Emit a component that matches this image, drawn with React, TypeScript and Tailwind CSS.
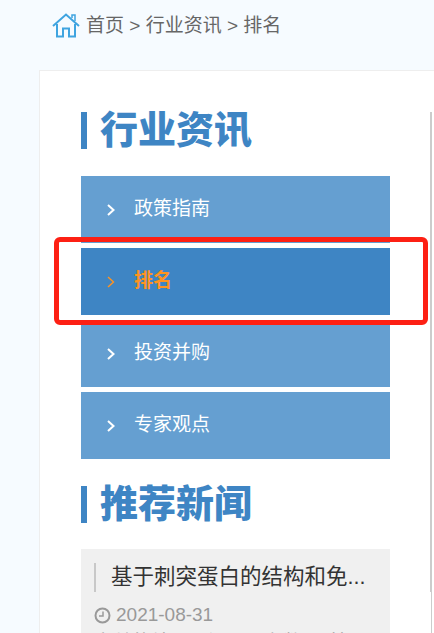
import React from "react";

const sansStack = "font-['Liberation_Sans','Noto_Sans_CJK_SC',sans-serif]";

const menu = [
  { label: "政策指南" },
  { label: "排名", active: true },
  { label: "投资并购" },
  { label: "专家观点" },
];

const HomeIcon = () => (
  <svg width="28" height="25" viewBox="0 0 28 25" fill="none" stroke="#3fa4e0" strokeWidth="2">
    <path d="M1 13 L14 1.5 L27 13" />
    <path d="M20 5 V2 H23 V8" strokeWidth="1.5" />
    <path d="M5 11 V23.5 H11 V15.5 H17 V23.5 H23 V11" />
  </svg>
);

const Chevron = ({ color, thin }: { color: string; thin?: boolean }) => (
  <svg width="8" height="12" viewBox="0 0 8 12" fill="none" stroke={color} strokeWidth={thin ? 1.4 : 2}>
    <path d="M1 1 L6.5 6 L1 11" />
  </svg>
);

const SectionTitle = ({ text }: { text: string }) => (
  <div className="flex items-center h-[37px] border-l-[6px] border-[#3e85c4] pl-[13px]">
    <h2 className="text-[38px] leading-[37px] font-black text-[#3e85c4]">{text}</h2>
  </div>
);

export default function App() {
  return (
    <div className={`relative h-[633px] w-[434px] overflow-hidden bg-[#f6fbff] ${sansStack}`}>
      <div className="flex items-center h-[70px] pl-[52px] pb-[19px]">
        <HomeIcon />
        <span className="ml-[6px] mt-[2px] text-[19px] text-[#666666]">首页 &gt; 行业资讯 &gt; 排名</span>
      </div>

      <div className="ml-[39px] h-[563px] border-l border-t border-[#eeeeee] bg-white pl-[41px] pt-[41px]">
        <div className="w-[309px]">
          <SectionTitle text="行业资讯" />
          <ul className="mt-[27px] flex flex-col gap-[5px]">
            {menu.map((item) => (
              <li
                key={item.label}
                className={`flex items-center h-[67px] pl-[26px] ${item.active ? "bg-[#3e85c4]" : "bg-[#659fd1]"}`}
              >
                <Chevron color={item.active ? "#ff9320" : "#ffffff"} thin={item.active} />
                <span
                  className={`ml-[20px] text-[19px] -translate-x-px ${item.active ? "font-bold text-[#ff9320]" : "text-white"}`}
                >
                  {item.label}
                </span>
              </li>
            ))}
          </ul>

          <div className="mt-[27px]">
            <SectionTitle text="推荐新闻" />
          </div>

          <div className="mt-[26px] bg-[#f0f0f0] px-[13px] pt-[14px]">
            <p className="border-l-[2px] border-[#c8c8c8] pl-[15px] text-[21.5px] leading-[29px] text-[#333333] whitespace-nowrap">
              基于刺突蛋白的结构和免...
            </p>
            <div className="mt-[11px] flex items-center gap-[5px] text-[19px] leading-[24px] text-[#999999]">
              <svg width="17" height="17" viewBox="0 0 17 17" fill="none" stroke="#999999" strokeWidth="2">
                <circle cx="8.5" cy="8.5" r="7" />
                <path d="M9 4.5 V9 H5" strokeWidth="1.5" />
              </svg>
              2021-08-31
            </div>
            <p className="mt-[4px] text-[19px] leading-[24px] text-[#999999] whitespace-nowrap">
              文献的结果强调 S、参数 ... 基于
            </p>
          </div>
        </div>
      </div>

      {/* scrollbar on the right edge, thumb then track line */}
      <div className="absolute left-[430px] top-[112px] h-[480px] w-[2px] bg-[#cccccc]" />
      <div className="absolute left-[431px] top-[592px] h-[41px] w-px bg-[#cccccc]" />

      {/* red annotation box drawn on top of the screenshot */}
      <div className="absolute left-[54px] top-[237px] h-[88px] w-[374px] rounded-[6px] border-[5px] border-[#fd2014]" />
    </div>
  );
}
